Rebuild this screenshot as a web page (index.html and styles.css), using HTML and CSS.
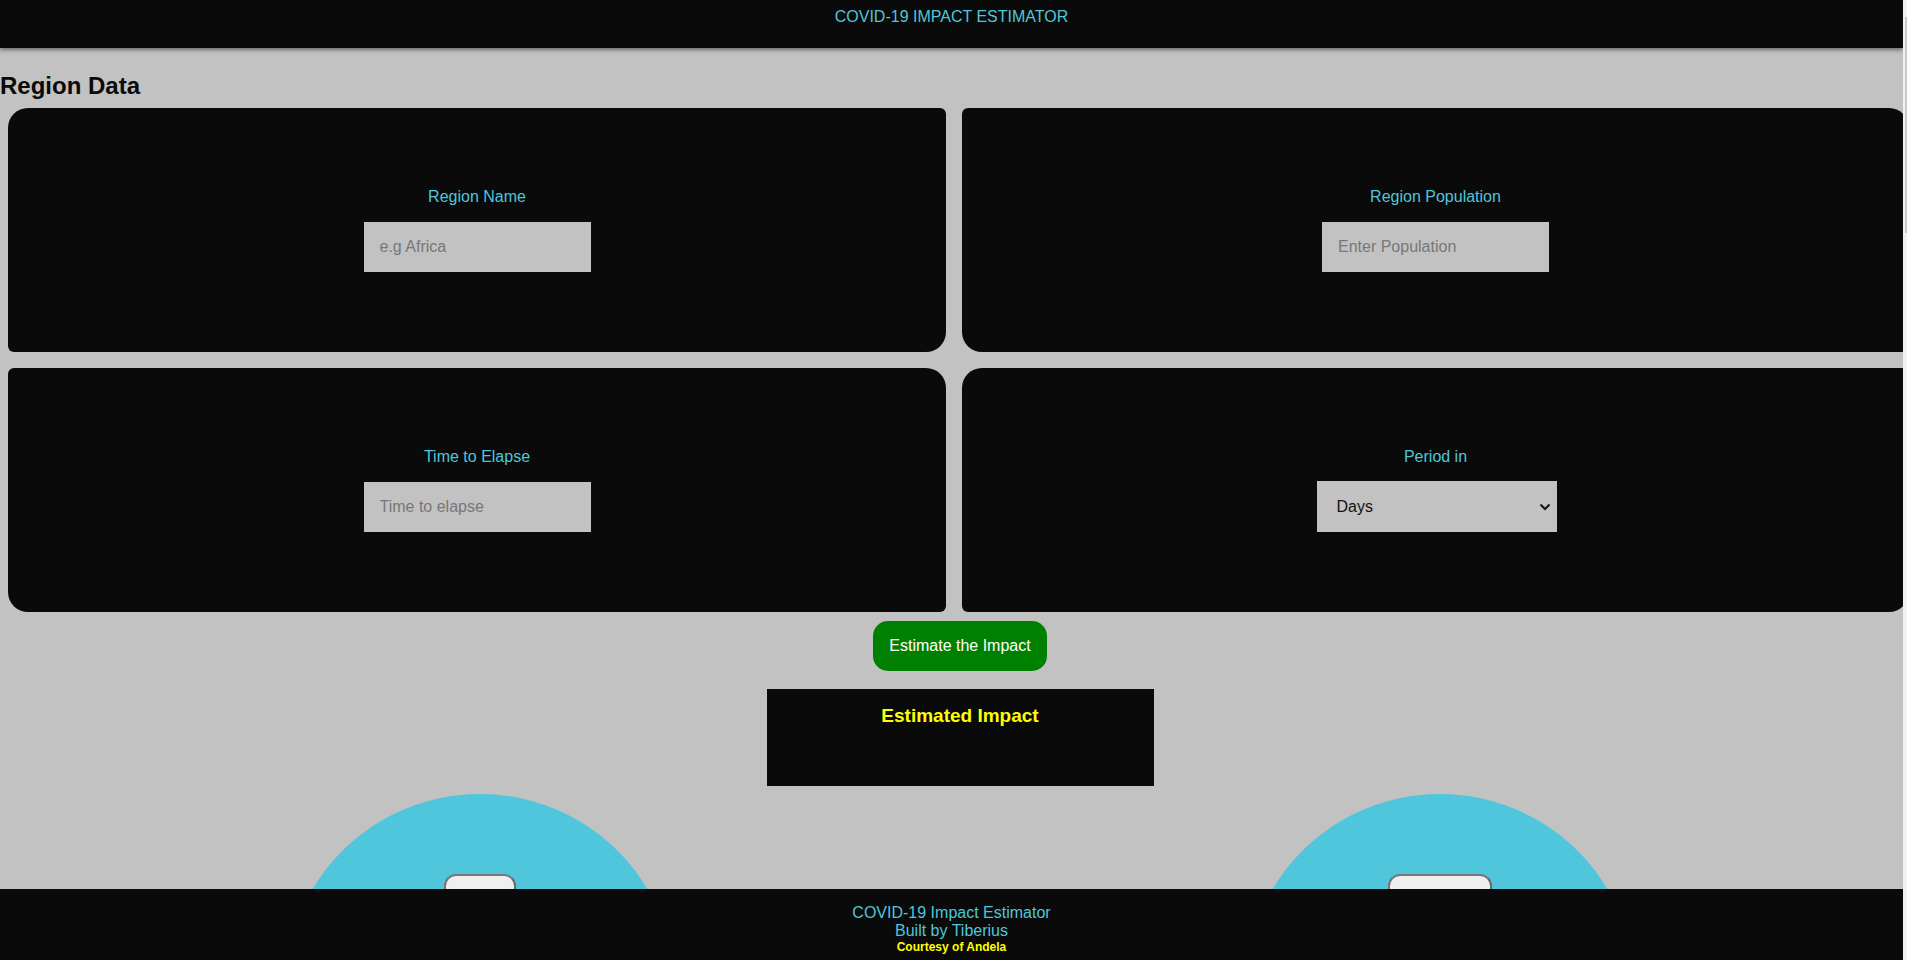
FILE: index.html
```html
<!DOCTYPE html>
<html lang="en">
<head>
<meta charset="utf-8">
<title>COVID-19 Impact Estimator</title>
<link rel="stylesheet" href="styles.css">
</head>
<body>
<header class="topbar">COVID-19 IMPACT ESTIMATOR</header>

<main class="main">
  <h2 class="section-title">Region Data</h2>
  <form class="cards">
    <div class="card card-a">
      <label class="card-label" for="region-name">Region Name</label>
      <input class="field" id="region-name" type="text" placeholder="e.g Africa">
    </div>
    <div class="card card-b">
      <label class="card-label" for="population">Region Population</label>
      <input class="field" id="population" type="text" placeholder="Enter Population">
    </div>
    <div class="card card-b">
      <label class="card-label" for="time">Time to Elapse</label>
      <input class="field" id="time" type="text" placeholder="Time to elapse">
    </div>
    <div class="card card-a">
      <label class="card-label" for="period">Period in</label>
      <div class="select-wrap">
        <select class="select" id="period">
          <option>Days</option>
          <option>Weeks</option>
          <option>Months</option>
        </select>
        <svg class="chevron" width="12" height="8" viewBox="0 0 12 8"><path d="M1.5 1.5 L6 6 L10.5 1.5" fill="none" stroke="#1a1a1a" stroke-width="2.2"/></svg>
      </div>
    </div>
  </form>

  <div class="actions">
    <button class="estimate-btn" type="button">Estimate the Impact</button>
  </div>

  <section class="impact">
    <h3 class="impact-title">Estimated Impact</h3>
  </section>

  <div class="circles">
    <div class="circle-col"><div class="circle"><button class="circle-btn" type="button"></button></div></div>
    <div class="circle-col"><div class="circle"><button class="circle-btn circle-btn-wide" type="button"></button></div></div>
  </div>
</main>

<footer class="footer">
  <div class="footer-line">COVID-19 Impact Estimator</div>
  <div class="footer-line">Built by Tiberius</div>
  <div class="footer-small">Courtesy of Andela</div>
</footer>

<div class="scrollbar"><div class="scrollbar-thumb"></div></div>
</body>
</html>
```

FILE: styles.css
```css
html {
  overflow: hidden;
  background: #c2c2c2;
}

body {
  margin: 0;
  width: 1903px;
  background: #c2c2c2;
  font-family: "Liberation Sans", Arial, sans-serif;
  font-size: 16px;
}

.topbar {
  height: 48px;
  box-sizing: border-box;
  padding-top: 8px;
  background: #0a0a0a;
  color: #4fc6db;
  text-align: center;
  font-size: 16px;
  box-shadow: 0 2px 4px rgba(0, 0, 0, 0.45);
  position: relative;
}

.main {
  width: 1920px;
}

.section-title {
  margin: 24px 0 8px 0;
  font-size: 24px;
  font-weight: bold;
  color: #0a0a0a;
}

.cards {
  display: grid;
  grid-template-columns: 938px 947px;
  grid-auto-rows: 244px;
  gap: 16px;
  padding: 0 8px;
  margin: 0;
}

.card {
  background: #0a0a0a;
  display: flex;
  flex-direction: column;
  align-items: center;
  justify-content: center;
}

.card-a {
  border-radius: 20px 6px;
}

.card-b {
  border-radius: 6px 20px;
}

.card-label {
  color: #4fc6db;
  font-size: 16px;
  margin-bottom: 16px;
}

.field {
  width: 227px;
  height: 50px;
  box-sizing: border-box;
  border: none;
  outline: none;
  background: #c2c2c2;
  padding: 0 16px;
  font-family: "Liberation Sans", Arial, sans-serif;
  font-size: 16px;
  color: #222;
}

.field::placeholder {
  color: #777;
}

.select-wrap {
  position: relative;
  margin-top: -1px;
  margin-left: 2px;
}

.select {
  -webkit-appearance: none;
  appearance: none;
  width: 240px;
  height: 51px;
  border: none;
  outline: none;
  background: #c2c2c2;
  padding: 0 20px;
  font-family: "Liberation Sans", Arial, sans-serif;
  font-size: 16px;
  color: #111;
  border-radius: 0;
}

.chevron {
  position: absolute;
  right: 6px;
  top: 22px;
  pointer-events: none;
}

.actions {
  display: flex;
  justify-content: center;
  margin-top: 9px;
}

.estimate-btn {
  width: 174px;
  height: 50px;
  border: none;
  border-radius: 15px;
  background: #008000;
  color: #ffffff;
  font-family: "Liberation Sans", Arial, sans-serif;
  font-size: 16px;
  padding: 0;
}

.impact {
  width: 387px;
  height: 97px;
  margin: 18px auto 0;
  background: #0a0a0a;
  box-sizing: border-box;
  padding-top: 16px;
  text-align: center;
}

.impact-title {
  margin: 0;
  color: #ffff00;
  font-size: 19px;
  font-weight: bold;
}

.circles {
  display: grid;
  grid-template-columns: 1fr 1fr;
  margin-top: 8px;
}

.circle-col {
  display: flex;
  justify-content: center;
}

.circle {
  width: 390px;
  height: 390px;
  border-radius: 50%;
  background: #4fc6db;
  display: flex;
  justify-content: center;
  padding-top: 80px;
  box-sizing: border-box;
}

.circle-btn {
  width: 72px;
  height: 40px;
  border-radius: 12px;
  border: 2px solid #6a6a6a;
  border-top-color: #767676;
  border-left-color: #767676;
  background: #efefef;
}

.circle-btn-wide {
  width: 104px;
}

.footer {
  position: fixed;
  left: 0;
  bottom: 0;
  width: 1903px;
  height: 71px;
  box-sizing: border-box;
  padding-top: 15px;
  background: #0a0a0a;
  text-align: center;
}

.footer-line {
  color: #4fc6db;
  font-size: 16px;
  line-height: 18px;
}

.footer-small {
  color: #ffff00;
  font-size: 12px;
  font-weight: bold;
  line-height: 15px;
}

.scrollbar {
  position: fixed;
  top: 0;
  right: 0;
  width: 4px;
  height: 100%;
  background: #f1f1f1;
}

.scrollbar-thumb {
  margin-top: 17px;
  margin-left: 2px;
  width: 2px;
  height: 216px;
  background: #c8c8c8;
}
```
